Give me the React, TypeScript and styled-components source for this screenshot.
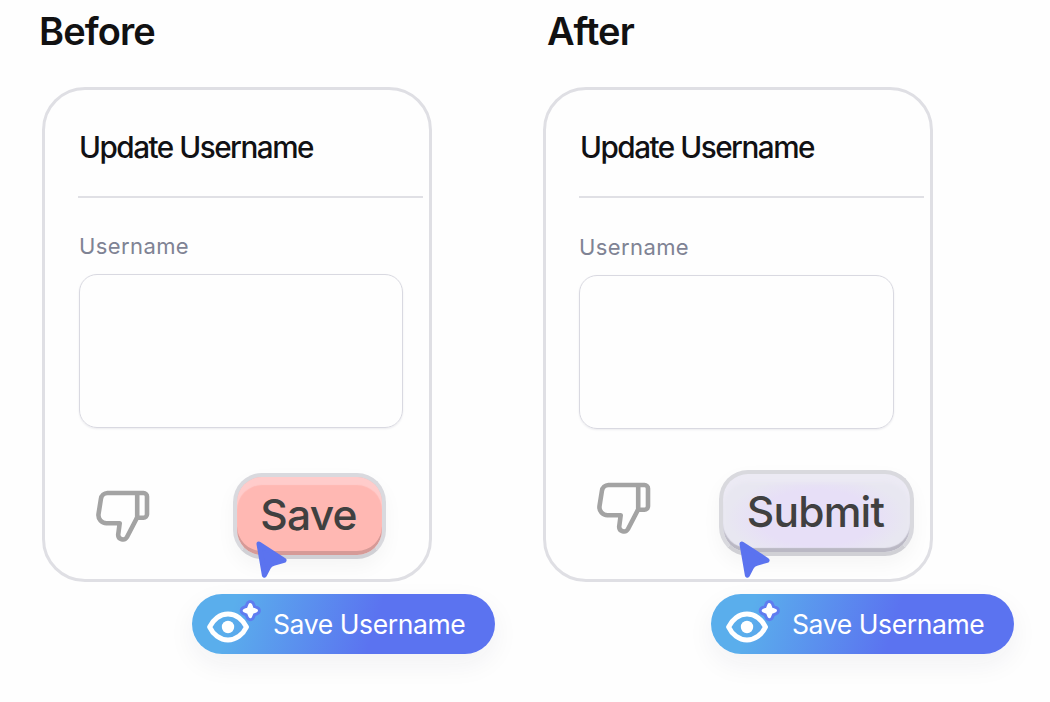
import { createGlobalStyle, styled } from 'styled-components';

const ThumbDown = ({ lift }: { lift: number }) => (
  <ThumbIcon $lift={lift} viewBox='0 0 56 54' fill='none' stroke='#a3a3a3' strokeWidth='4.6'>
    <path
      d='M12.500 3H48.500A3.500 3.500 0 0 1 52 6.500V24.200A3.500 3.500 0 0 1 48.500 27.700H42L32 47A4.700 4.700 0 0 1 23.200 44.500L24.700 33.200H11.500A8 8 0 0 1 3.500 24.200L5.900 9A7 7 0 0 1 12.500 3Z'
      strokeLinejoin='round'
    />
    <path d='M42.200 3V28' />
  </ThumbIcon>
);

const Cursor = ({ x, y }: { x: number; y: number }) => (
  <CursorIcon $x={x} $y={y} viewBox='0 0 32 38'>
    <path
      d='M3 3L28 19.300L17.500 22.300Q14 23.300 12.300 26.500L8.400 34.200Z'
      fill='#5b73ef'
      stroke='#5b73ef'
      strokeWidth='5'
      strokeLinejoin='round'
    />
  </CursorIcon>
);

const starPath =
  'M43.300 3.800L45 7.900L49.100 9.600L45 11.300L43.300 15.400L41.600 11.300L37.500 9.600L41.600 7.900Z';

const Eye = () => (
  <EyeIcon viewBox='0 0 56 46' fill='none' strokeLinejoin='round'>
    <path
      d='M2.600 26C6 18.500 13 13 21 13S36 18.500 39.500 26C36 33.500 29 39 21 39S6 33.500 2.600 26Z'
      stroke='white'
      strokeWidth='5'
    />
    <circle cx='21' cy='26' r='6.2' fill='white' />
    <path d={starPath} fill='#5f7cf0' stroke='#5f7cf0' strokeWidth='9.5' />
    <path d={starPath} fill='white' stroke='white' strokeWidth='3.6' />
  </EyeIcon>
);

const App = () => {
  return (
    <>
      <GlobalStyle />
      <Page>
        <Panel>
          <Title $indent={-3}>Before</Title>
          <Card>
            <Heading>Update Username</Heading>
            <Divider />
            <Field $top={32} $indent={1}>
              <Label>Username</Label>
              <Input $width={324} />
            </Field>
            <Actions $top={45} $right={43}>
              <ThumbDown lift={0} />
              <SaveButton>
                Save
                <Cursor x={19} y={64} />
              </SaveButton>
            </Actions>
          </Card>
          <Pill $offset={150}>
            <Eye />
            Save Username
          </Pill>
        </Panel>
        <Panel>
          <Title $indent={4}>After</Title>
          <Card>
            <Heading>Update Username</Heading>
            <Divider />
            <Field $top={33} $indent={0}>
              <Label>Username</Label>
              <Input $width={315} />
            </Field>
            <Actions $top={41} $right={16}>
              <ThumbDown lift={5} />
              <SubmitButton>
                Submit
                <Cursor x={16} y={67} />
              </SubmitButton>
            </Actions>
          </Card>
          <Pill $offset={168}>
            <Eye />
            Save Username
          </Pill>
        </Panel>
      </Page>
    </>
  );
};

export default App;

const GlobalStyle = createGlobalStyle`
  * {
    box-sizing: border-box;
  }
  body {
    margin: 0;
    background: #fefefe;
    font-family: Inter, 'Liberation Sans', sans-serif;
  }
`;

const Page = styled.main`
  display: flex;
  gap: 111px;
  height: 702px;
  padding: 8px 0 0 42px;
  overflow: hidden;
`;

const Panel = styled.section`
  width: 390px;
  flex-shrink: 0;
`;

const Title = styled.h2<{ $indent: number }>`
  height: 79px;
  margin: 0 0 0 ${({ $indent }) => $indent}px;
  font-size: 38px;
  font-weight: 600;
  line-height: 47px;
  letter-spacing: -0.9px;
  color: #111112;
`;

const Card = styled.div`
  width: 390px;
  height: 495px;
  padding: 36px 0 0 33px;
  border: 3px solid #dfdfe4;
  border-radius: 43px;
`;

const Heading = styled.h3`
  height: 70px;
  margin: 0 0 0 1px;
  font-size: 29.7px;
  font-weight: 500;
  line-height: 42px;
  letter-spacing: -1.5px;
  color: #111114;
`;

const Divider = styled.div`
  width: 345px;
  height: 2px;
  background: #e0e0e5;
`;

const Field = styled.div<{ $top: number; $indent: number }>`
  padding: ${({ $top, $indent }) => `${$top}px 0 0 ${$indent}px`};
`;

const Label = styled.div`
  height: 44px;
  font-size: 22px;
  font-weight: 400;
  line-height: 32px;
  letter-spacing: 0.4px;
  color: #7f8394;
`;

const Input = styled.div<{ $width: number }>`
  width: ${({ $width }) => $width}px;
  height: 154px;
  border: 1px solid #d9d9e1;
  border-radius: 18px;
  box-shadow: 0 1px 2px rgba(20, 20, 60, 0.08);
`;

const Actions = styled.div<{ $top: number; $right: number }>`
  display: flex;
  justify-content: space-between;
  align-items: flex-start;
  padding: ${({ $top, $right }) => `${$top}px ${$right}px 0 17px`};
`;

const ThumbIcon = styled.svg<{ $lift: number }>`
  width: 56px;
  height: 54px;
  margin-top: ${({ $lift }) => 17 - $lift}px;
`;

const Button = styled.div`
  position: relative;
  height: 86px;
  padding-right: 2px;
  border: 4px solid #d9d9de;
  border-bottom-color: #d0d0d5;
  border-radius: 29px;
  font-size: 42.5px;
  font-weight: 500;
  line-height: 76px;
  letter-spacing: -0.8px;
  text-align: center;
  color: #404040;
`;

const SaveButton = styled(Button)`
  width: 153px;
  background: #ffb8b3;
  box-shadow: inset 0 8px 1px #ffcccb, inset 0 -4px 0 #d69a97, 0 8px 20px rgba(0, 0, 0, 0.04);
`;

const SubmitButton = styled(Button)`
  width: 195px;
  background: radial-gradient(ellipse 105px 50px at 50% 56%, #e7dff7 55%, #e8e7f1 85%);
  box-shadow: inset 0 8px 4px #eceaf4, inset 0 -4px 1px #bab8c4, 0 8px 20px rgba(0, 0, 0, 0.04);
`;

const CursorIcon = styled.svg<{ $x: number; $y: number }>`
  position: absolute;
  left: ${({ $x }) => $x}px;
  top: ${({ $y }) => $y}px;
  width: 32px;
  height: 38px;
`;

const Pill = styled.div<{ $offset: number }>`
  display: flex;
  align-items: center;
  gap: 10px;
  width: 303px;
  height: 60px;
  margin: 12px 0 0 ${({ $offset }) => $offset}px;
  padding-left: 15px;
  border-radius: 30px;
  background: linear-gradient(107deg, #5aaeec 14%, #5b73f0 60%);
  box-shadow: 0 10px 28px rgba(30, 40, 60, 0.06);
  font-size: 26.5px;
  letter-spacing: -0.4px;
  white-space: nowrap;
  color: white;
`;

const EyeIcon = styled.svg`
  width: 56px;
  height: 46px;
  flex-shrink: 0;
  overflow: visible;
`;
